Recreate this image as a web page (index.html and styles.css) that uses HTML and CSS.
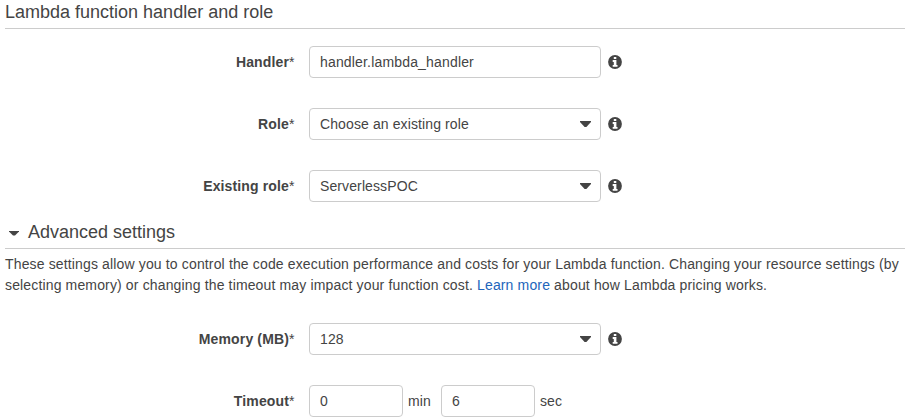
FILE: index.html
```html
<!DOCTYPE html>
<html lang="en">
<head>
<meta charset="utf-8">
<title>Lambda function configuration</title>
<link rel="stylesheet" href="styles.css">
</head>
<body>
<svg class="defs"><symbol id="info" viewBox="0 0 14 14"><circle cx="7" cy="7" r="6.9" fill="#444"/><path fill="#fff" d="M5.8 2h2.5v2.1H5.8zM4.7 5.1h3.7v4.8h1.1v1.9H4.7V9.9h1.1V6.9H4.7z"/></symbol></svg>
<main>
<h2>Lambda function handler and role</h2>
<div class="row"><label><b>Handler</b>*</label><div class="field handler">handler.lambda_handler</div><svg class="info"><use href="#info"/></svg></div>
<div class="row"><label><b>Role</b>*</label><div class="field select">Choose an existing role</div><svg class="info"><use href="#info"/></svg></div>
<div class="row"><label><b>Existing role</b>*</label><div class="field select">ServerlessPOC</div><svg class="info"><use href="#info"/></svg></div>
<h2 class="advanced">Advanced settings</h2>
<p>These settings allow you to control the code execution performance and costs for your Lambda function. Changing your resource settings (by<br>selecting memory) or changing the timeout may impact your function cost. <a>Learn more</a> about how Lambda pricing works.</p>
<div class="row"><label><b>Memory (MB)</b>*</label><div class="field select">128</div><svg class="info"><use href="#info"/></svg></div>
<div class="row"><label><b>Timeout</b>*</label><div class="field small">0</div><span class="unit">min</span><div class="field small">6</div><span class="unit">sec</span></div>
</main>
</body>
</html>
```
FILE: styles.css
```css
* { box-sizing: border-box; }
body { margin: 0; background: #fff; color: #444; font: 14px/21px "Liberation Sans", Arial, sans-serif; }
.defs { display: none; }
main { padding: 0 1px 0 5px; }
h2 { margin: 0 0 17px; height: 29px; border-bottom: 1px solid #ccc; font-size: 18px; line-height: 25px; font-weight: 400; }
.row { display: flex; align-items: center; height: 32px; margin-bottom: 30px; }
.row:last-child { margin-bottom: 0; }
label { width: 289.6px; margin-right: 14.4px; text-align: right; letter-spacing: .14px; }
.field { width: 292px; height: 32px; padding: 0 10px; border: 1px solid #ccc; border-radius: 4px; line-height: 30px; letter-spacing: .11px; }
.handler { letter-spacing: .17px; }
.select { display: flex; align-items: center; justify-content: space-between; padding-right: 9px; }
.select::after { content: ""; width: 11px; height: 6px; background: #444; clip-path: polygon(0 0, 100% 0, 100% 17%, 58% 100%, 42% 100%, 0 17%); }
.info { width: 14px; height: 14px; margin-left: 7px; }
.advanced { display: flex; align-items: center; margin: -12px 0 5px; padding-bottom: 4px; line-height: 25px; }
.advanced::before { content: ""; width: 10px; height: 5px; margin: 2px 9px 0 4px; background: #444; clip-path: polygon(0 0, 100% 0, 100% 20%, 60% 100%, 40% 100%, 0 20%); }
p { margin: 0 0 27px; letter-spacing: .145px; white-space: nowrap; }
a { color: #2265bb; }
.small { width: 94px; }
.unit { width: 38px; padding-left: 5px; letter-spacing: .11px; }
```
